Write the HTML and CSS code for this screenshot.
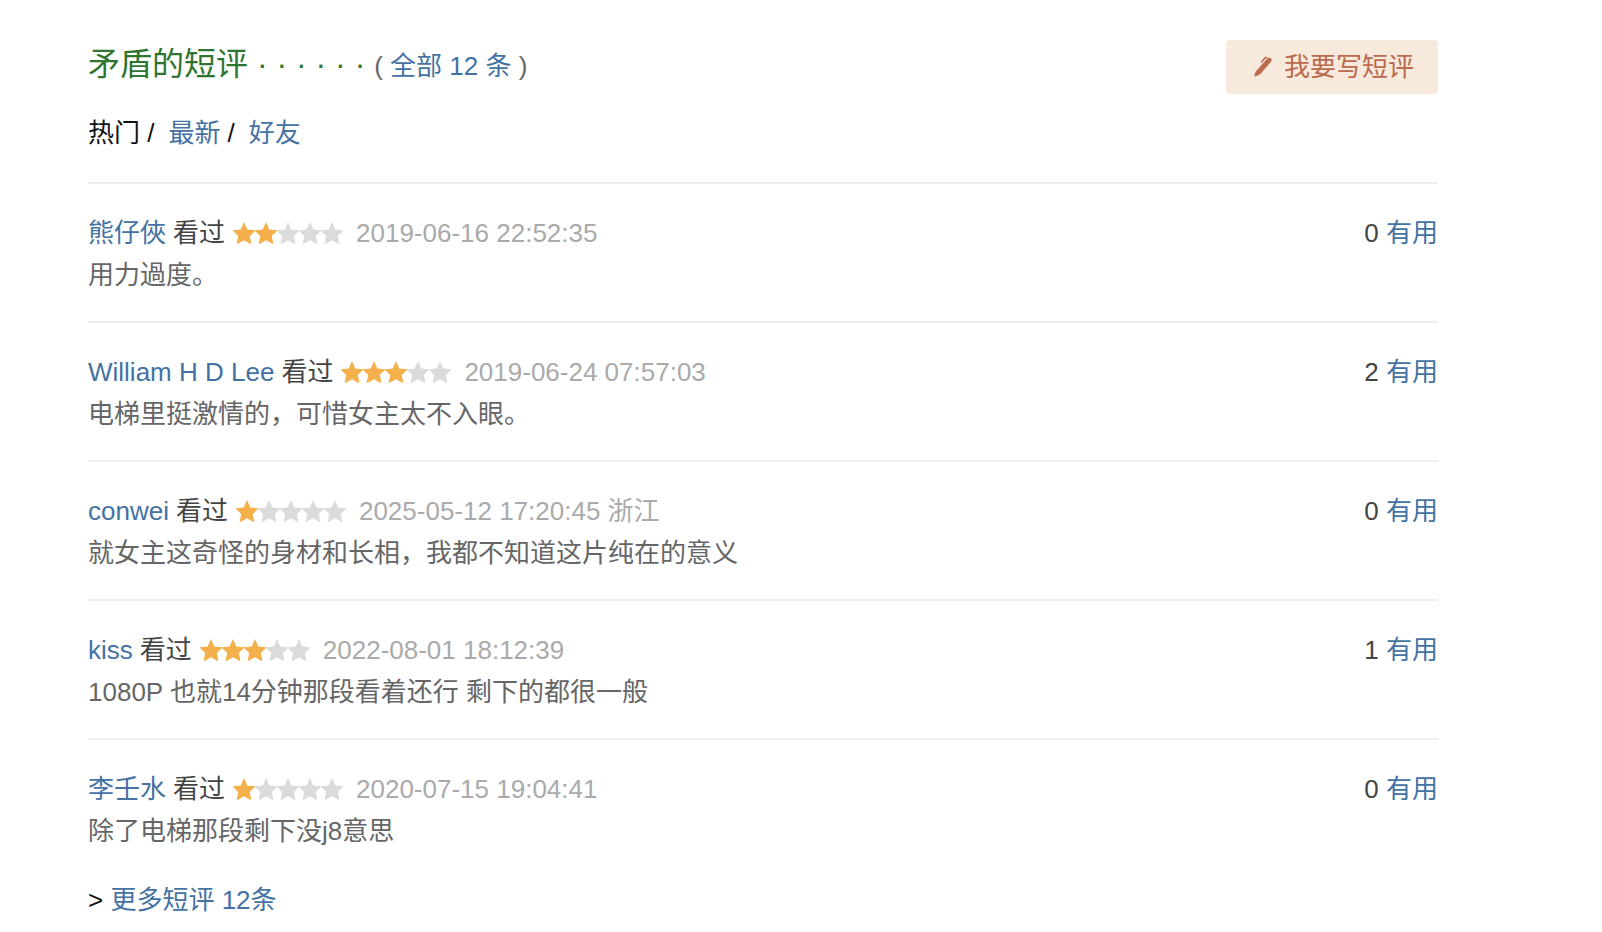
FILE: index.html
```html
<!DOCTYPE html>
<html lang="zh-CN">
<head>
<meta charset="utf-8">
<title>矛盾的短评</title>
<link rel="stylesheet" href="styles.css">
</head>
<body>
<svg class="defs" aria-hidden="true">
  <symbol id="star" viewBox="0 0 22 22"><path d="M11 0 14.3 7.5 22 8.3V9L16.8 13.9 18.3 21.4 17.6 22 11 18.3 4.4 22 3.7 21.4 5.2 13.9 0 9V8.3L7.7 7.5Z"/></symbol>
</svg>
<main class="comments">
  <header class="head">
    <h2 class="title">矛盾的短评 · · · · · · <span class="total">( <a href="#all">全部 12 条</a> )</span></h2>
    <button class="write" type="button"><svg class="pen" viewBox="0 0 18 22" aria-hidden="true"><path d="M13.2 2.6Q15 1 16.8 2.2 18.4 3.6 17 5.8L6.8 17.4Q5 19.3.6 20.8.2 17.6 2 15.2Z"/><path class="clip" d="M7.2 6.4 11.2 1.8 13.2 1.6"/></svg><span>我要写短评</span></button>
  </header>
  <nav class="tabs"><span>热门 /</span><a href="#new">最新</a><span>/</span><a href="#friends">好友</a></nav>
  <ul class="list">
    <li class="item">
      <div class="meta"><a href="#u1">熊仔俠</a><span>看过</span><span class="stars" role="img" aria-label="2 星"><svg class="on"><use href="#star"/></svg><svg class="on"><use href="#star"/></svg><svg><use href="#star"/></svg><svg><use href="#star"/></svg><svg><use href="#star"/></svg></span><time class="time">2019-06-16 22:52:35</time><span class="vote">0 <a href="#v1">有用</a></span></div>
      <p class="text">用力過度。</p>
    </li>
    <li class="item">
      <div class="meta"><a href="#u2">William H D Lee</a><span>看过</span><span class="stars" role="img" aria-label="3 星"><svg class="on"><use href="#star"/></svg><svg class="on"><use href="#star"/></svg><svg class="on"><use href="#star"/></svg><svg><use href="#star"/></svg><svg><use href="#star"/></svg></span><time class="time">2019-06-24 07:57:03</time><span class="vote">2 <a href="#v2">有用</a></span></div>
      <p class="text">电梯里挺激情的，可惜女主太不入眼。</p>
    </li>
    <li class="item">
      <div class="meta"><a href="#u3">conwei</a><span>看过</span><span class="stars" role="img" aria-label="1 星"><svg class="on"><use href="#star"/></svg><svg><use href="#star"/></svg><svg><use href="#star"/></svg><svg><use href="#star"/></svg><svg><use href="#star"/></svg></span><span class="time">2025-05-12 17:20:45 浙江</span><span class="vote">0 <a href="#v3">有用</a></span></div>
      <p class="text">就女主这奇怪的身材和长相，我都不知道这片纯在的意义</p>
    </li>
    <li class="item">
      <div class="meta"><a href="#u4">kiss</a><span>看过</span><span class="stars" role="img" aria-label="3 星"><svg class="on"><use href="#star"/></svg><svg class="on"><use href="#star"/></svg><svg class="on"><use href="#star"/></svg><svg><use href="#star"/></svg><svg><use href="#star"/></svg></span><time class="time">2022-08-01 18:12:39</time><span class="vote">1 <a href="#v4">有用</a></span></div>
      <p class="text">1080P 也就14分钟那段看着还行 剩下的都很一般</p>
    </li>
    <li class="item">
      <div class="meta"><a href="#u5">李壬水</a><span>看过</span><span class="stars" role="img" aria-label="1 星"><svg class="on"><use href="#star"/></svg><svg><use href="#star"/></svg><svg><use href="#star"/></svg><svg><use href="#star"/></svg><svg><use href="#star"/></svg></span><time class="time">2020-07-15 19:04:41</time><span class="vote">0 <a href="#v5">有用</a></span></div>
      <p class="text">除了电梯那段剩下没j8意思</p>
    </li>
  </ul>
  <p class="more">&gt; <a href="#more">更多短评 12条</a></p>
</main>
</body>
</html>
```
FILE: styles.css
```css
body {
  margin: 0;
  background: #fff;
  color: #111;
  font: 26px/42px "Liberation Sans", "Noto Sans CJK SC", sans-serif;
}
a { color: #4472a3; text-decoration: none; }
.defs { position: absolute; width: 0; height: 0; }
.comments { margin: 40px 164px 0 88px; }
.head { display: flex; justify-content: space-between; align-items: flex-start; }
.title { margin: 0; font-size: 32px; font-weight: 400; line-height: 48px; color: #2f752f; }
.total { font-size: 26px; color: #666; }
.write {
  display: flex;
  align-items: center;
  gap: 12px;
  height: 54px;
  padding: 0 24px 0 28px;
  border: 0;
  border-radius: 4px;
  background: #f7e9dc;
  color: #bb6a4d;
  font: inherit;
}
.pen { width: 18px; height: 22px; fill: currentColor; }
.clip { fill: none; stroke: currentColor; stroke-width: 1.5; }
.tabs { display: flex; gap: 7px; padding: 18px 0 28px; }
.tabs a { margin-left: 7px; }
.list { margin: 0; padding: 0; list-style: none; }
.item { padding: 29px 0 25px; border-top: 2px solid #eee; }
.meta { display: flex; align-items: center; gap: 7px; line-height: 41px; color: #444; }
.stars { display: flex; margin: 0 6px 2px 1px; }
.stars svg { width: 22px; height: 22px; fill: #dbdbdb; }
.stars .on { fill: #f3b04b; }
.time { color: #aaa; }
.vote { margin-left: auto; }
.text { margin: 0; color: #666; }
.more { margin: 2px 0 0; }
```
